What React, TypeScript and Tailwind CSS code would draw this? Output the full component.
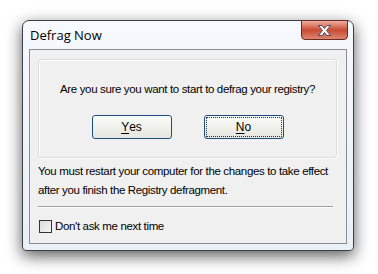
import React from "react";

const ui = { fontFamily: '"Liberation Sans", Arial, sans-serif' };

function CloseGlyph() {
  return (
    <svg width="17" height="13" viewBox="0 0 17 13">
      <path
        d="M2.5 1.5h3.5l2.5 3 2.5-3h3.5l-4 5 4 5h-3.5l-2.5-3-2.5 3h-3.5l4-5z"
        fill="#ffffff"
        stroke="#4a4f5c"
        strokeWidth="1"
        strokeLinejoin="round"
      />
    </svg>
  );
}

function Button({ label, focused }: { label: string; focused?: boolean }) {
  return (
    <div className="w-[80px] h-[24px] rounded-[3px] border border-[#1c4e86] bg-gradient-to-b from-[#fbfbf9] to-[#e6e6e0] p-[2px]">
      <div
        className={`w-full h-full flex items-center justify-center text-[12px] text-black ${
          focused ? "outline outline-1 outline-dotted outline-[#333]" : ""
        }`}
      >
        <span className="underline underline-offset-2">{label[0]}</span>
        {label.slice(1)}
      </div>
    </div>
  );
}

export default function App() {
  return (
    <main className="w-[378px] h-[274px] bg-white pt-[20px] pl-[22px]" style={ui}>
      {/* window frame */}
      <div className="w-[332px] h-[231px] rounded-t-[7px] rounded-b-[4px] border border-[#3d3f44] bg-gradient-to-b from-[#f6f9fd] to-[#e9f0f8] shadow-[0_5px_16px_rgba(0,0,0,0.65)] flex flex-col px-[6px]">
        {/* title bar */}
        <div className="h-[28px] flex items-start justify-between">
          <span
            className="pt-[6px] pl-[1px] text-[13px] leading-[16px] text-black"
            style={{ fontFamily: '"Open Sans", "Noto Sans", sans-serif' }}
          >
            Defrag Now
          </span>
          <div className="-mt-[1px] mr-[-1px] w-[47px] h-[20px] rounded-b-[4px] border border-[#6b2a22] bg-gradient-to-b from-[#eeb0a2] via-[#c84a33] to-[#dc8470] flex items-center justify-center">
            <CloseGlyph />
          </div>
        </div>

        {/* client area */}
        <div className="h-[195px] border border-[#8a8d92] bg-[#f0f0f0] flex flex-col text-[11.5px] tracking-[-0.35px]">
          <div className="ml-[8px] mt-[9px] w-[299px] h-[99px] rounded-[3px] border border-[#dcdcdc] shadow-[inset_1px_1px_0_#ffffff,1px_1px_0_#ffffff] flex flex-col items-center">
            <p className="mt-[21px] leading-[16px] text-black whitespace-nowrap">
              Are you sure you want to start to defrag your registry?
            </p>
            <div className="mt-[18px] flex gap-[32px] tracking-normal">
              <Button label="Yes" />
              <Button label="No" focused />
            </div>
          </div>

          <p className="ml-[8px] mt-[4px] leading-[19px] text-black whitespace-nowrap">
            You must restart your computer for the changes to take effect
            <br />
            after you finish the Registry defragment.
          </p>

          <div className="ml-[8px] mt-[6px] w-[295px] h-[2px] border-t border-[#a0a0a0] border-b border-b-white" />

          <label className="ml-[9px] mt-[10px] flex items-center gap-[3px] text-black">
            <span className="w-[13px] h-[13px] border border-[#333] bg-gradient-to-br from-[#dcdcdc] to-[#f4f4f4]" />
            Don't ask me next time
          </label>
        </div>
      </div>
    </main>
  );
}
